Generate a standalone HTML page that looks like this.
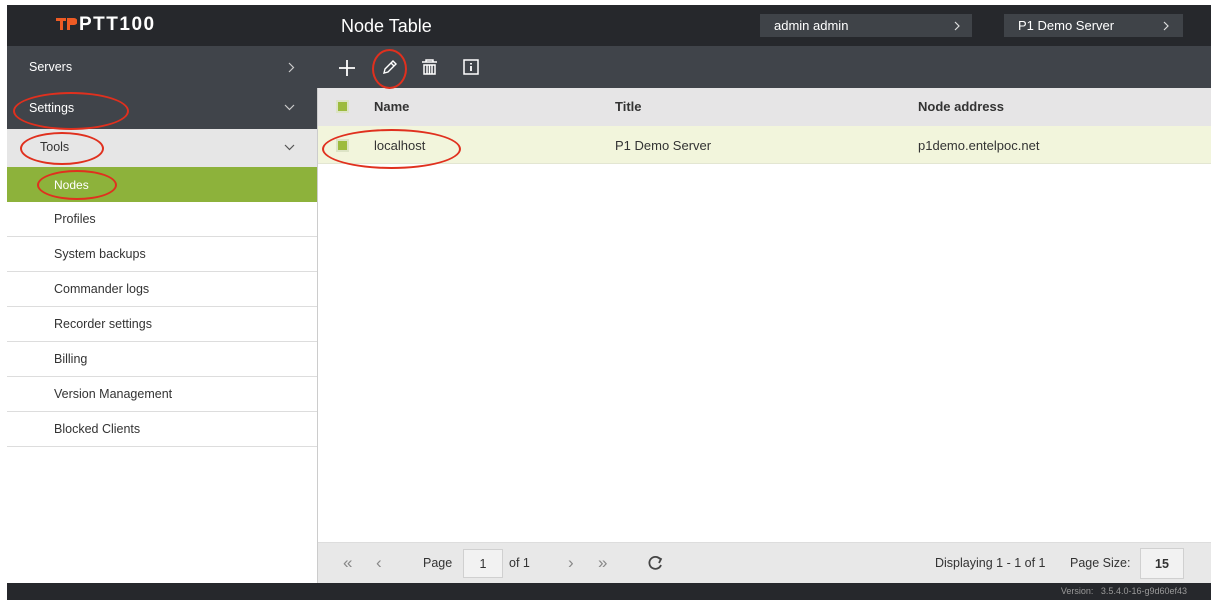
<!DOCTYPE html>
<html><head><style>
*{margin:0;padding:0;box-sizing:border-box}
body{width:1216px;height:607px;background:#fff;font-family:"Liberation Sans",sans-serif;position:relative;overflow:hidden;font-size:12.5px;color:#333}
.a{position:absolute}
.side{left:7px;width:310px}
.item{left:7px;width:310px;height:35px;border-bottom:1px solid #ddd;padding-left:47px;line-height:34px;color:#333;font-size:12.5px;background:#fff}
.ell{position:absolute;border:2px solid #e0301e;border-radius:50%}
.chk{position:absolute;width:13px;height:13px;background:#9dbb3e;border:2px solid #dde4c6}
</style></head><body>
<div class="a" style="left:7px;top:5px;width:1204px;height:41px;background:#26282c"></div>
<div class="a" style="left:56px;top:16px;width:21px;height:16px">
<svg width="21" height="16" viewBox="0 0 21 16"><path d="M0 2h10v3h-3v9h-3v-9h-4z M11 2h7a3 3 0 0 1 0 7h-4v5h-3z" fill="#ee5b24"/></svg></div>
<div class="a" style="left:79px;top:14px;color:#fff;font-weight:bold;font-size:19px;letter-spacing:1.5px">PTT100</div>
<div class="a" style="left:341px;top:16px;color:#fff;font-size:18px">Node Table</div>
<div class="a" style="left:760px;top:14px;width:212px;height:23px;background:#3f4348;color:#fff;font-size:13px;line-height:23px;padding-left:14px">admin admin<svg class="a" style="right:12px;top:7px" width="6" height="10"><path d="M1 1l4 4-4 4" stroke="#ddd" stroke-width="1.2" fill="none"/></svg></div>
<div class="a" style="left:1004px;top:14px;width:179px;height:23px;background:#3f4348;color:#fff;font-size:13px;line-height:23px;padding-left:14px">P1 Demo Server<svg class="a" style="right:14px;top:7px" width="6" height="10"><path d="M1 1l4 4-4 4" stroke="#ddd" stroke-width="1.2" fill="none"/></svg></div>

<div class="a" style="left:7px;top:46px;width:1204px;height:42px;background:#40444a"></div>
<div class="a side" style="top:88px;height:41px;background:#40444a"></div>
<div class="a" style="left:29px;top:60px;color:#fff">Servers</div>
<svg class="a" style="left:288px;top:62px" width="7" height="11"><path d="M1 1l4.5 4.5L1 10" stroke="#ccc" stroke-width="1.2" fill="none"/></svg>
<div class="a" style="left:29px;top:101px;color:#fff">Settings</div>
<svg class="a" style="left:284px;top:104px" width="11" height="7"><path d="M1 1l4.5 4.5L10 1" stroke="#ccc" stroke-width="1.2" fill="none"/></svg>
<div class="a side" style="top:129px;height:38px;background:#e6e6e6"></div>
<div class="a" style="left:40px;top:140px;color:#333">Tools</div>
<svg class="a" style="left:284px;top:144px" width="11" height="7"><path d="M1 1l4.5 4.5L10 1" stroke="#555" stroke-width="1.2" fill="none"/></svg>
<div class="a side" style="top:167px;height:35px;background:#8db23b"></div>
<div class="a" style="left:54px;top:178px;color:#fff;font-size:12px">Nodes</div>
<div class="a item" style="top:202px">Profiles</div>
<div class="a item" style="top:237px">System backups</div>
<div class="a item" style="top:272px">Commander logs</div>
<div class="a item" style="top:307px">Recorder settings</div>
<div class="a item" style="top:342px">Billing</div>
<div class="a item" style="top:377px">Version Management</div>
<div class="a item" style="top:412px">Blocked Clients</div>
<div class="a" style="left:317px;top:88px;width:1px;height:495px;background:#ccc"></div>

<svg class="a" style="left:338px;top:59px" width="18" height="18"><path d="M9 1v16M1 9h16" stroke="#fff" stroke-width="1.8"/></svg>
<svg class="a" style="left:381px;top:60px" width="16" height="16"><path d="M3 13l1-4 8-8 3 3-8 8z M10 3l3 3" stroke="#fff" stroke-width="1.4" fill="none"/></svg>
<svg class="a" style="left:421px;top:59px" width="17" height="17"><path d="M1 3h15M5 3V1h7v2M3 6h11v9H3zM6 6v9M8.5 6v9M11 6v9" stroke="#fff" stroke-width="1.5" fill="none"/></svg>
<svg class="a" style="left:463px;top:59px" width="16" height="16"><rect x="1" y="1" width="14" height="14" stroke="#fff" stroke-width="1.5" fill="none"/><path d="M8 4v1.5M8 7v5" stroke="#fff" stroke-width="1.8"/></svg>

<div class="a" style="left:318px;top:88px;width:893px;height:38px;background:#e6e5e6"></div>
<div class="chk" style="left:336px;top:100px"></div>
<div class="a" style="left:374px;top:99px;font-weight:bold;font-size:13px">Name</div>
<div class="a" style="left:615px;top:99px;font-weight:bold;font-size:13px">Title</div>
<div class="a" style="left:918px;top:99px;font-weight:bold;font-size:13px">Node address</div>
<div class="a" style="left:318px;top:126px;width:893px;height:38px;background:#f2f5dc;border-bottom:1px solid #e3e6d2"></div>
<div class="chk" style="left:336px;top:139px"></div>
<div class="a" style="left:374px;top:138px;font-size:13px">localhost</div>
<div class="a" style="left:615px;top:138px;font-size:13px">P1 Demo Server</div>
<div class="a" style="left:918px;top:138px;font-size:13px">p1demo.entelpoc.net</div>

<div class="a" style="left:318px;top:542px;width:893px;height:41px;background:#e8e8e8;border-top:1px solid #ddd"></div>
<div class="a" style="left:343px;top:553px;color:#888;font-size:17px">&laquo;</div>
<div class="a" style="left:376px;top:553px;color:#888;font-size:17px">&lsaquo;</div>
<div class="a" style="left:423px;top:556px">Page</div>
<div class="a" style="left:463px;top:549px;width:40px;height:29px;background:#f2f2f2;border:1px solid #d0d0d0;text-align:center;line-height:29px">1</div>
<div class="a" style="left:509px;top:556px">of 1</div>
<div class="a" style="left:568px;top:553px;color:#888;font-size:17px">&rsaquo;</div>
<div class="a" style="left:598px;top:553px;color:#888;font-size:17px">&raquo;</div>
<svg class="a" style="left:647px;top:555px" width="17" height="17"><path d="M13 4A6 6 0 1 0 14 10" stroke="#444" stroke-width="1.8" fill="none"/><path d="M10 2l4 2-2 4" stroke="#444" stroke-width="1.8" fill="none"/></svg>
<div class="a" style="left:935px;top:556px">Displaying 1 - 1 of 1</div>
<div class="a" style="left:1070px;top:556px">Page Size:</div>
<div class="a" style="left:1140px;top:548px;width:44px;height:31px;background:#f2f2f2;border:1px solid #d0d0d0;text-align:center;line-height:31px;font-weight:bold">15</div>
<div class="a" style="left:7px;top:583px;width:1204px;height:17px;background:#26282c;color:#999;font-size:9px;line-height:17px;text-align:right;padding-right:24px">Version:&nbsp;&nbsp; 3.5.4.0-16-g9d60ef43</div>

<div class="ell" style="left:372px;top:49px;width:35px;height:40px"></div>
<div class="ell" style="left:13px;top:92px;width:116px;height:38px"></div>
<div class="ell" style="left:20px;top:132px;width:84px;height:33px"></div>
<div class="ell" style="left:37px;top:170px;width:80px;height:30px"></div>
<div class="ell" style="left:322px;top:129px;width:139px;height:40px"></div>
</body></html>
